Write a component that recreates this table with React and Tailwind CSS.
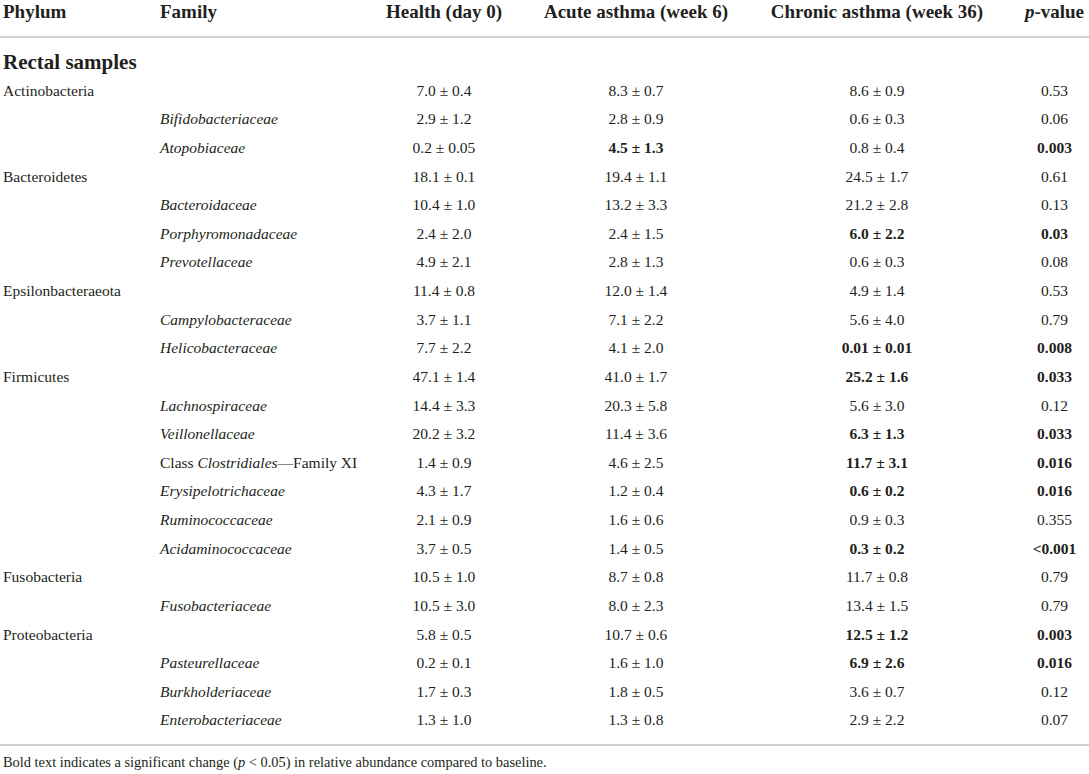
import React from "react";

const rows = [
  { p: "Actinobacteria", v: ["7.0 ± 0.4", "8.3 ± 0.7", "8.6 ± 0.9", "0.53"] },
  { f: "Bifidobacteriaceae", v: ["2.9 ± 1.2", "2.8 ± 0.9", "0.6 ± 0.3", "0.06"] },
  { f: "Atopobiaceae", v: ["0.2 ± 0.05", "4.5 ± 1.3", "0.8 ± 0.4", "0.003"], b: [1, 3] },
  { p: "Bacteroidetes", v: ["18.1 ± 0.1", "19.4 ± 1.1", "24.5 ± 1.7", "0.61"] },
  { f: "Bacteroidaceae", v: ["10.4 ± 1.0", "13.2 ± 3.3", "21.2 ± 2.8", "0.13"] },
  { f: "Porphyromonadaceae", v: ["2.4 ± 2.0", "2.4 ± 1.5", "6.0 ± 2.2", "0.03"], b: [2, 3] },
  { f: "Prevotellaceae", v: ["4.9 ± 2.1", "2.8 ± 1.3", "0.6 ± 0.3", "0.08"] },
  { p: "Epsilonbacteraeota", v: ["11.4 ± 0.8", "12.0 ± 1.4", "4.9 ± 1.4", "0.53"] },
  { f: "Campylobacteraceae", v: ["3.7 ± 1.1", "7.1 ± 2.2", "5.6 ± 4.0", "0.79"] },
  { f: "Helicobacteraceae", v: ["7.7 ± 2.2", "4.1 ± 2.0", "0.01 ± 0.01", "0.008"], b: [2, 3] },
  { p: "Firmicutes", v: ["47.1 ± 1.4", "41.0 ± 1.7", "25.2 ± 1.6", "0.033"], b: [2, 3] },
  { f: "Lachnospiraceae", v: ["14.4 ± 3.3", "20.3 ± 5.8", "5.6 ± 3.0", "0.12"] },
  { f: "Veillonellaceae", v: ["20.2 ± 3.2", "11.4 ± 3.6", "6.3 ± 1.3", "0.033"], b: [2, 3] },
  { f: "CLASS", v: ["1.4 ± 0.9", "4.6 ± 2.5", "11.7 ± 3.1", "0.016"], b: [2, 3] },
  { f: "Erysipelotrichaceae", v: ["4.3 ± 1.7", "1.2 ± 0.4", "0.6 ± 0.2", "0.016"], b: [2, 3] },
  { f: "Ruminococcaceae", v: ["2.1 ± 0.9", "1.6 ± 0.6", "0.9 ± 0.3", "0.355"] },
  { f: "Acidaminococcaceae", v: ["3.7 ± 0.5", "1.4 ± 0.5", "0.3 ± 0.2", "<0.001"], b: [2, 3] },
  { p: "Fusobacteria", v: ["10.5 ± 1.0", "8.7 ± 0.8", "11.7 ± 0.8", "0.79"] },
  { f: "Fusobacteriaceae", v: ["10.5 ± 3.0", "8.0 ± 2.3", "13.4 ± 1.5", "0.79"] },
  { p: "Proteobacteria", v: ["5.8 ± 0.5", "10.7 ± 0.6", "12.5 ± 1.2", "0.003"], b: [2, 3] },
  { f: "Pasteurellaceae", v: ["0.2 ± 0.1", "1.6 ± 1.0", "6.9 ± 2.6", "0.016"], b: [2, 3] },
  { f: "Burkholderiaceae", v: ["1.7 ± 0.3", "1.8 ± 0.5", "3.6 ± 0.7", "0.12"] },
  { f: "Enterobacteriaceae", v: ["1.3 ± 1.0", "1.3 ± 0.8", "2.9 ± 2.2", "0.07"] },
];

const valueCls = [
  "text-center",
  "text-center",
  "text-center",
  "text-center pl-[30px]",
];

export default function App() {
  return (
    <div
      className="w-[1089px] bg-white text-[#231f20]"
      style={{ fontFamily: '"Liberation Serif", "DejaVu Serif", serif' }}
    >
      <table className="w-[1089px] table-fixed border-collapse">
        <colgroup>
          <col className="w-[157px]" />
          <col className="w-[223px]" />
          <col className="w-[128px]" />
          <col className="w-[256px]" />
          <col className="w-[226px]" />
          <col className="w-[99px]" />
        </colgroup>
        <thead>
          <tr className="border-b-2 border-[#d2d2d2] text-[19px] font-bold leading-[24px]">
            <th className="pl-[3px] pb-[12px] text-left font-bold">Phylum</th>
            <th className="pl-[3px] pb-[12px] text-left font-bold">Family</th>
            <th className="pb-[12px] text-center font-bold">Health (day 0)</th>
            <th className="pb-[12px] text-center font-bold">Acute asthma (week 6)</th>
            <th className="pb-[12px] text-center font-bold">Chronic asthma (week 36)</th>
            <th className="pl-[30px] pb-[12px] text-center font-bold whitespace-nowrap">
              <i>p</i>-value
            </th>
          </tr>
        </thead>
        <tbody className="text-[15.5px]">
          <tr>
            <td colSpan={6} className="pl-[3px] pt-[10px] text-[21px] font-bold leading-[28px]">
              Rectal samples
            </td>
          </tr>
          {rows.map((r, i) => (
            <tr key={i} className="h-[28.64px]">
              <td className="pl-[3px] align-middle">{r.p || ""}</td>
              <td className="pl-[3px] align-middle whitespace-nowrap">
                {r.f === "CLASS" ? (
                  <span>
                    Class <i>Clostridiales</i>—Family XI
                  </span>
                ) : r.f ? (
                  <i>{r.f}</i>
                ) : null}
              </td>
              {r.v.map((v, j) => (
                <td
                  key={j}
                  className={`${valueCls[j]} align-middle whitespace-nowrap ${
                    r.b && r.b.includes(j) ? "font-bold" : ""
                  }`}
                >
                  {v}
                </td>
              ))}
            </tr>
          ))}
        </tbody>
      </table>
      <div className="h-[10px]" />
      <div className="h-[2px] w-[1089px] bg-[#d2d2d2]" />
      <p className="pl-[3px] pt-[6px] text-[14.4px] leading-[20px]">
        Bold text indicates a significant change (<i>p</i> &lt; 0.05) in relative abundance compared to baseline.
      </p>
    </div>
  );
}
